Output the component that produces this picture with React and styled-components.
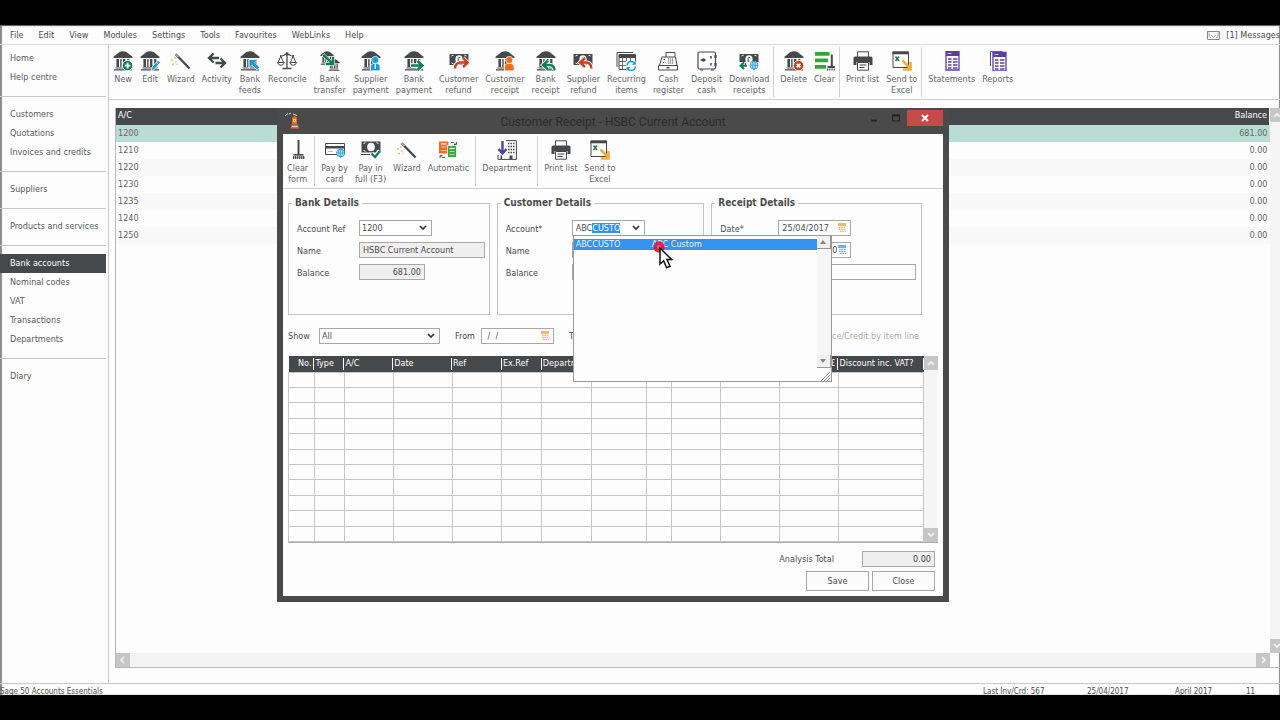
import React, { useEffect, useRef } from "react";
import styled, { createGlobalStyle } from "styled-components";

const DARK = "#46494c";
const GREEN = "#0f7f5a";
const BLUE = "#1c9ad6";
const ORANGE = "#f26a1b";
const RED = "#c8401c";
const PURPLE = "#5b3fa0";

/* ---------- icons ---------- */

const Icon = ({ children, size = 20 }) => (
  <svg width={size} height={size} viewBox="0 0 20 20" fill="none" aria-hidden="true">
    {children}
  </svg>
);

const BankShape = () => (
  <g fill={DARK}>
    <path d="M0.5 5.8 L6.5 1 Q10 -0.4 13.5 1 L19.5 5.8 V7 H0.5z" />
    <path d="M3.4 8h2.6v8H3.4zM7.2 8h1.4v8H7.2zM10 8h2.4v8H10zM14.2 8h2.2v8h-2.2z" />
    <path d="M2.5 16.4h15v1h-15zM1 18.2h18v1.4H1z" />
  </g>
);

const NoteShape = () => (
  <g>
    <path d="M0.5 3h19v11h-19z" fill={DARK} />
    <path d="M2.5 5l2-0.8M17.5 5l-2-0.8M2.5 12l2 .8M17.5 12l-2 .8" stroke="#fdfdfd" />
    <ellipse cx="10" cy="8.5" rx="3.6" ry="4.2" fill="#fdfdfd" />
    <path d="M8.6 11.2h3M9.2 11V7.6q0-1.6 2-1" stroke={DARK} />
  </g>
);

const NewIcon = () => (
  <Icon>
    <BankShape />
    <circle cx="14.6" cy="14.6" r="5.2" fill={GREEN} stroke="#fdfdfd" />
    <path d="M14.6 11.8v5.6M11.8 14.6h5.6" stroke="#fff" strokeWidth="1.8" />
  </Icon>
);

const EditIcon = () => (
  <Icon>
    <BankShape />
    <path d="M11.2 20l1-4 5.8-6.6 2.4 2.2-5.8 6.6z" fill={BLUE} stroke="#fdfdfd" strokeWidth=".8" />
    <path d="M16.2 11.4l2.4 2.2" stroke="#fdfdfd" strokeWidth=".8" />
  </Icon>
);

const WizardIcon = () => (
  <Icon>
    <path d="M4.5 3l14 14.5" stroke={DARK} strokeWidth="2.4" />
    <path d="M4 2.5l3.4 3.5" stroke="#fdfdfd" strokeWidth="1" />
    <path d="M0 9h2M3 7h2M4 11h1.6M1 13.5h2M5.5 13.5h1" stroke="#e0c070" strokeWidth="1.6" />
  </Icon>
);

const ActivityIcon = () => (
  <Icon>
    <path d="M6.5 2.5L2 7l4.5 4.5M2.5 7H12" stroke={DARK} strokeWidth="2.4" />
    <path d="M13.5 7.5L18 12l-4.5 4.5M17.5 12H8.5" stroke={DARK} strokeWidth="2.4" />
  </Icon>
);

const FeedsIcon = () => (
  <Icon>
    <BankShape />
    <path d="M9 8.5h9l-3 3 4.8 5-2.6 2.6-5-4.8-3.2 3z" fill={BLUE} stroke="#fdfdfd" strokeWidth=".8" />
  </Icon>
);

const ReconcileIcon = () => (
  <Icon>
    <path d="M10 2v15M3 5q4 0 5-1.5h4q1 1.5 5 1.5M5.5 17.5h9" stroke={DARK} strokeWidth="1.3" />
    <path d="M3.8 5L1.2 11.5M3.8 5l2.7 6.5M16.2 5l-2.7 6.5M16.2 5l2.6 6.5" stroke={DARK} />
    <path d="M.5 11.5h6.8q-.8 2.8-3.4 2.8T.5 11.5zM12.7 11.5h6.8q-.8 2.8-3.4 2.8t-3.4-2.8z" fill="#fdfdfd" stroke={DARK} />
    <circle cx="10" cy="2.5" r="1.3" fill={DARK} />
  </Icon>
);

const TransferIcon = () => (
  <Icon>
    <g transform="scale(.7)"><BankShape /></g>
    <g transform="translate(8 8) scale(.6)"><BankShape /></g>
    <path d="M4 2.5l7.5 7V5.5h3v9H5.5v-3h4L2 5z" fill={GREEN} stroke="#fdfdfd" strokeWidth=".6" />
  </Icon>
);

const PersonShape = ({ color }) => (
  <g fill={color} stroke="#fdfdfd" strokeWidth=".8">
    <path d="M9.5 19.8v-3.5q0-4 4.8-4t4.8 4v3.5z" />
    <circle cx="14.3" cy="9" r="3.6" />
  </g>
);

const SupplierPaymentIcon = () => (
  <Icon>
    <BankShape />
    <PersonShape color={BLUE} />
    <path d="M14.3 13v5" stroke="#fdfdfd" strokeWidth="1.2" />
  </Icon>
);

const CustomerReceiptIcon = () => (
  <Icon>
    <BankShape />
    <PersonShape color={ORANGE} />
  </Icon>
);

const BankPaymentIcon = () => (
  <Icon>
    <BankShape />
    <path d="M7 14.5h10M13.5 10l4.8 4.5-4.8 4.5" stroke="#fdfdfd" strokeWidth="4.5" />
    <path d="M7 14.5h10.5M13.5 10l4.8 4.5-4.8 4.5" stroke={GREEN} strokeWidth="2.6" />
  </Icon>
);

const BankReceiptIcon = () => (
  <Icon>
    <BankShape />
    <path d="M12 9.5l-5 4.5 5 4.5M7.5 14h6q4.5 0 5 5" stroke="#fdfdfd" strokeWidth="4" />
    <path d="M12 9.5l-5 4.5 5 4.5M7.5 14h6q4.5 0 5 5" stroke={GREEN} strokeWidth="2.4" />
  </Icon>
);

const CustomerRefundIcon = () => (
  <Icon>
    <NoteShape />
    <path d="M6 17q0-5.5 6-5.5h5M14 7l4.8 4.5L14 16" stroke="#fdfdfd" strokeWidth="4" />
    <path d="M6 17.5q0-6 6-6h6M14 7l4.8 4.5L14 16" stroke={RED} strokeWidth="2.4" />
  </Icon>
);

const SupplierRefundIcon = () => (
  <Icon>
    <NoteShape />
    <path d="M12 7l-5 4.5 5 4.5M8 11.5h5q5 0 5.5 6" stroke="#fdfdfd" strokeWidth="4" />
    <path d="M12 7l-5 4.5 5 4.5M7.5 11.5h5.5q5 0 5.5 6" stroke={RED} strokeWidth="2.4" />
  </Icon>
);

const RecurringIcon = () => (
  <Icon>
    <path d="M1 16V1.5h16" stroke={DARK} />
    <path d="M3 3.5h16.5v15H3z" fill="#fdfdfd" stroke={DARK} />
    <path d="M3 4h16.5v3H3z" fill={DARK} />
    <path d="M6.5 7v11M10.5 7v11M14.5 7v11M3 10.5h16M3 14.5h16" stroke={DARK} strokeWidth=".8" />
    <path d="M10 10h10v10H10z" fill="#fdfdfd" />
    <path d="M11 14.5q.5-4 4.5-4 2 0 3.5 1.8M19.5 15.5q-.5 4-4.5 4-2 0-3.5-1.8" stroke={BLUE} strokeWidth="1.5" />
    <path d="M19.8 9.8v4h-4zM10.5 20v-4h4z" fill={BLUE} />
  </Icon>
);

const RegisterIcon = () => (
  <Icon>
    <path d="M8 6V1.5h9V6" stroke={DARK} />
    <path d="M4 6h13.5l1.5 8.5H1.5zM.5 14.5h19v4.5H.5z" stroke={DARK} />
    <path d="M5.5 8.5h2M5 11.5h2.5M10 8h6M10 10h6M10 12h6" stroke={DARK} strokeDasharray="1.2 .8" />
    <path d="M8.5 16.7h3" stroke={DARK} strokeWidth="1.4" />
  </Icon>
);

const DepositIcon = () => (
  <Icon>
    <path d="M2.5 1h14.5q1.5 0 1.5 1.5v14q0 1.5-1.5 1.5H2.5Q1 18 1 16.5v-14Q1 1 2.5 1z" stroke={DARK} strokeWidth="1.2" />
    <path d="M3 18.5h3v1H3zM14 18.5h3v1h-3z" fill={DARK} />
    <path d="M3.5 9h5M14 5v2.5M14 12v2.5" stroke={DARK} strokeWidth="1.5" />
    <circle cx="6.5" cy="9" r="1.8" fill={DARK} />
    <path d="M18.5 4v3M18.5 12v3" stroke={DARK} strokeWidth="2.2" />
  </Icon>
);

const GlobeShape = ({ cx, cy, r }) => (
  <g stroke={BLUE} strokeWidth=".8">
    <circle cx={cx} cy={cy} r={r} fill="#d9f0f8" />
    <ellipse cx={cx} cy={cy} rx={r / 2} ry={r} />
    <path d={`M${cx - r} ${cy}h${r * 2}M${cx} ${cy - r}v${r * 2}`} />
  </g>
);

const DownloadIcon = () => (
  <Icon>
    <NoteShape />
    <path d="M0 11h20v9H0z" fill="#fdfdfd" />
    <path d="M6.5 12v3" stroke={DARK} />
    <path d="M5 11.5l-3.5 3.3L5 18M2 14.8h6" stroke={GREEN} strokeWidth="2" />
    <GlobeShape cx={15} cy={14.2} r={4} />
  </Icon>
);

const DeleteIcon = () => (
  <Icon>
    <BankShape />
    <circle cx="14.6" cy="14.6" r="5.2" fill={RED} stroke="#fdfdfd" />
    <path d="M12.8 12.8l3.6 3.6M16.4 12.8l-3.6 3.6" stroke="#fff" strokeWidth="1.8" />
  </Icon>
);

const ClearIcon = () => (
  <Icon>
    <path d="M0 1h14.5v3.8H0zM0 7.5h13v3.8H0zM0 14h11v3.8H0z" fill="#34a53c" />
    <path d="M16.8 3.5V15" stroke={DARK} strokeWidth="2" />
    <path d="M12.5 15h7.5v2h-7.5z" fill={DARK} />
    <path d="M12 18.5h8" stroke={DARK} strokeWidth="2" strokeDasharray="1 .8" />
  </Icon>
);

const PrintIcon = () => (
  <Icon>
    <path d="M4.5 6V.8h11V6" stroke={DARK} />
    <path d="M2 5.5h16q1.5 0 1.5 1.5v7h-3v-3h-13v3h-3V7Q.5 5.5 2 5.5z" fill={DARK} />
    <path d="M4.5 11.5h11v7.7h-11z" fill="#fdfdfd" stroke={DARK} />
    <path d="M6.5 14h7M6.5 16.5h5" stroke={DARK} />
  </Icon>
);

const ExcelIcon = () => (
  <Icon>
    <path d="M1 1h15.5v15.5H1z" fill="#fdfdfd" stroke={DARK} />
    <path d="M.5.5h16.5v2.8H.5z" fill={DARK} />
    <path d="M3.5 5.5l3.5 4.5M7 5.5L3.5 10" stroke="#1b7a4a" strokeWidth="1.5" />
    <path d="M10.5 9.5l7 7M18.5 11v7.5H11" stroke="#f3ad3a" strokeWidth="2.6" />
  </Icon>
);

const SheetShape = () => (
  <g>
    <path d="M4 .5h13v18.5H4z" fill="#fdfdfd" stroke={PURPLE} strokeWidth="1.3" />
    <path d="M4 .5h13v4.5H4z" fill={PURPLE} />
    <path d="M5.5 2.5h4" stroke="#cfc4ec" />
    <path d="M6 8h3.5M11 8h4.5M6 11h3.5M11 11h4.5M6 14h3.5M11 14h4.5M6 17h3.5M11 17h4.5" stroke={PURPLE} strokeWidth="1.6" />
  </g>
);

const StatementsIcon = () => <Icon><SheetShape /></Icon>;

const ReportsIcon = () => (
  <Icon>
    <path d="M2.5 15V.7h12" stroke={PURPLE} />
    <g transform="translate(1 1)"><SheetShape /></g>
  </Icon>
);

const BrushIcon = () => (
  <Icon>
    <path d="M10.5 0v14" stroke={DARK} strokeWidth="2" />
    <path d="M5.5 14h10v1.6h-10z" fill={DARK} />
    <path d="M5 17.5h11.5" stroke={DARK} strokeWidth="3" strokeDasharray="1.4 .6" />
  </Icon>
);

const CardIcon = () => (
  <Icon>
    <path d="M.5 3.5h19v11H.5z" fill="#fdfdfd" stroke={DARK} />
    <path d="M.5 6h19v2.5H.5z" fill={DARK} />
    <path d="M3 11.5h5" stroke="#bbb" />
    <GlobeShape cx={15.5} cy={13} r={4} />
  </Icon>
);

const PayFullIcon = () => (
  <Icon>
    <path d="M.5 1.5h19v11H.5z" fill={DARK} />
    <path d="M2.5 3.5l2-.8M17.5 3.5l-2-.8M2.5 10.5l2 .8M17.5 10.5l-2 .8" stroke="#fdfdfd" />
    <ellipse cx="10" cy="7" rx="3.8" ry="4.3" fill="#fdfdfd" />
    <path d="M0 14.5h9" stroke={DARK} />
    <path d="M10.5 13.5l3.5 3.5 5-6" stroke="#fdfdfd" strokeWidth="4.5" />
    <path d="M10.5 13.5l3.5 3.5 5-6" stroke={GREEN} strokeWidth="2.4" />
  </Icon>
);

const AutomaticIcon = () => (
  <Icon>
    <path d="M1 1.5h9.5v12H1z" fill={ORANGE} />
    <path d="M3 4h5.5" stroke="#fde" strokeWidth="1.5" />
    <path d="M3 7h5.5M3 10.5h5.5" stroke="#fbd2b8" strokeWidth=".8" />
    <path d="M9.5 5.5h9v12h-9z" fill="#44a548" stroke="#fdfdfd" strokeWidth=".8" />
    <path d="M11.5 8.5h5" stroke="#e4f5e4" strokeWidth="1.3" />
    <path d="M11.5 11.5h5M11.5 14.5h5" stroke="#bfe3c0" strokeWidth=".8" />
    <path d="M13 2.5q3.5-1 4.5 1.5M16 4.5h2.5V2M7 17.5q-3.5 1-4.5-1.5M4.5 15.5H2V18" stroke={DARK} strokeWidth=".9" />
  </Icon>
);

const DepartmentIcon = () => (
  <Icon>
    <path d="M9 .6h10.4v18.8H1V15" stroke={DARK} />
    <path d="M11 3.5h6.5M11 6.5h6.5M11 9.5h6.5M11 12.5h6.5" stroke={DARK} strokeWidth="1.6" strokeDasharray="1.5 1" />
    <path d="M12.5 15.5h3V19h-3zM3.5 15.5h1.5V19H3.5z" fill={DARK} />
    <path d="M5.5 1v12M1.5 9l4 4.5 4-4.5" stroke={PURPLE} strokeWidth="2.4" />
  </Icon>
);

const Chevron = ({ d = "M2 3l3 3 3-3", color = "#333" }) => (
  <svg width="10" height="10" viewBox="0 0 10 10" fill="none" aria-hidden="true">
    <path d={d} stroke={color} strokeWidth="1.7" />
  </svg>
);

const CalendarGlyph = ({ color }) => (
  <svg width="10" height="10" viewBox="0 0 10 10" aria-hidden="true">
    <path d="M1 0h8v3H1z" fill={color} />
    <path d="M2 3h6.5v6.5H2z" fill={color} opacity=".25" />
    <path d="M2 4.5h7M2 6.5h7M3 8.5h6" stroke={color} strokeDasharray="1.6 .8" />
  </svg>
);

/* ---------- data ---------- */

const menuItems = ["File", "Edit", "View", "Modules", "Settings", "Tools", "Favourites", "WebLinks", "Help"];

const navGroups = [
  ["Home", "Help centre"],
  ["Customers", "Quotations", "Invoices and credits"],
  ["Suppliers"],
  ["Products and services"],
  ["Bank accounts", "Nominal codes", "VAT", "Transactions", "Departments"],
  ["Diary"],
];

const mainTools = [
  [
    ["New", NewIcon],
    ["Edit", EditIcon],
    ["Wizard", WizardIcon],
    ["Activity", ActivityIcon],
    ["Bank\nfeeds", FeedsIcon],
    ["Reconcile", ReconcileIcon],
    ["Bank\ntransfer", TransferIcon],
    ["Supplier\npayment", SupplierPaymentIcon],
    ["Bank\npayment", BankPaymentIcon],
    ["Customer\nrefund", CustomerRefundIcon],
    ["Customer\nreceipt", CustomerReceiptIcon],
    ["Bank\nreceipt", BankReceiptIcon],
    ["Supplier\nrefund", SupplierRefundIcon],
    ["Recurring\nitems", RecurringIcon],
    ["Cash\nregister", RegisterIcon],
    ["Deposit\ncash", DepositIcon],
    ["Download\nreceipts", DownloadIcon],
  ],
  [["Delete", DeleteIcon], ["Clear", ClearIcon]],
  [["Print list", PrintIcon], ["Send to\nExcel", ExcelIcon]],
  [["Statements", StatementsIcon], ["Reports", ReportsIcon]],
];

const dialogTools = [
  [["Clear\nform", BrushIcon]],
  [
    ["Pay by\ncard", CardIcon],
    ["Pay in\nfull (F3)", PayFullIcon],
    ["Wizard", WizardIcon],
    ["Automatic", AutomaticIcon],
  ],
  [["Department", DepartmentIcon]],
  [["Print list", PrintIcon], ["Send to\nExcel", ExcelIcon]],
];

const accounts = [
  ["1200", "681.00"],
  ["1210", "0.00"],
  ["1220", "0.00"],
  ["1230", "0.00"],
  ["1235", "0.00"],
  ["1240", "0.00"],
  ["1250", "0.00"],
];

const receiptColumns = [
  { label: "No.", width: 26, right: true },
  { label: "Type", width: 30 },
  { label: "A/C", width: 49 },
  { label: "Date", width: 59 },
  { label: "Ref", width: 50 },
  { label: "Ex.Ref", width: 40 },
  { label: "Department", width: 49 },
  { label: "Details", width: 55 },
  { label: "T/C", width: 25 },
  { label: "Amount £", width: 49, right: true },
  { label: "Receipt £", width: 59, right: true },
  { label: "Discount £", width: 59, right: true },
  { label: "Discount inc. VAT?", width: 85 },
];

/* ---------- parts ---------- */

const Tools = ({ groups, inset }) => (
  <Toolbar>
    {groups.map((group, i) => (
      <ToolGroup key={i} $inset={inset}>
        {group.map(([label, Glyph]) => (
          <ToolButton key={label} type="button">
            <Glyph />
            <span>{label}</span>
          </ToolButton>
        ))}
      </ToolGroup>
    ))}
  </Toolbar>
);

const DateField = ({ id, value, color, right }) => (
  <FieldBox $width={73}>
    <BareInput id={id} defaultValue={value} $right={right} />
    <CalendarGlyph color={color} />
  </FieldBox>
);

const SelectField = ({ id, width, options }) => (
  <FieldBox $width={width}>
    <BareSelect id={id}>
      {options.map((o) => (
        <option key={o}>{o}</option>
      ))}
    </BareSelect>
    <Chevron />
  </FieldBox>
);

const AccountPicker = () => {
  const input = useRef(null);

  useEffect(() => {
    input.current.focus();
    input.current.setSelectionRange(3, 8);
  }, []);

  return (
    <Picker>
      <FieldBox $width={73}>
        <BareInput id="account" ref={input} defaultValue="ABCCUSTO" />
        <Chevron />
      </FieldBox>
      <PickerMenu>
        <PickerList role="listbox" aria-label="Accounts">
          <PickerOption role="option" aria-selected="true">
            <span>ABCCUSTO</span>
            <span>ABC Custom</span>
          </PickerOption>
        </PickerList>
        <PickerScroll>
          <ClassicButton type="button" aria-label="Scroll up">
            <svg width="6" height="4" viewBox="0 0 6 4"><path d="M0 4l3-4 3 4z" fill="#888" /></svg>
          </ClassicButton>
          <PickerTrack />
          <ClassicButton type="button" aria-label="Scroll down">
            <svg width="6" height="4" viewBox="0 0 6 4"><path d="M0 0h6L3 4z" fill="#888" /></svg>
          </ClassicButton>
          <svg width="13" height="13" viewBox="0 0 13 13">
            <path d="M4 13l9-9M7 13l6-6M10 13l3-3" stroke="#888" />
          </svg>
        </PickerScroll>
      </PickerMenu>
    </Picker>
  );
};

const ReceiptDialog = () => (
  <Dialog role="dialog" aria-labelledby="dialog-title">
    <TitleBar>
      <TitleIcon>
        <svg width="16" height="18" viewBox="0 0 16 18" fill="none">
          <path d="M1 4l3-2.500M5 2l2-1M9 2l4 1.500" stroke="#ddd" />
          <path d="M6.500 16.500h8.500l-1-4h-6.500z" fill={ORANGE} />
          <path d="M8 12V6q2.500-3.500 5 0v6z" fill={ORANGE} />
          <path d="M9.500 7.500h2v2h-2zM8 14.500h5.500" stroke="#fbe0cf" strokeWidth=".9" />
        </svg>
      </TitleIcon>
      <Title id="dialog-title">Customer Receipt - HSBC Current Account</Title>
      <WindowButtons>
        <WindowButton type="button" aria-label="Minimise">
          <svg width="10" height="10" viewBox="0 0 10 10"><path d="M2 6.500h6v2H2z" fill="#222" /></svg>
        </WindowButton>
        <WindowButton type="button" aria-label="Maximise">
          <svg width="10" height="10" viewBox="0 0 10 10" fill="none">
            <path d="M1.500 2h7v6h-7z" stroke="#222" />
            <path d="M1 1.500h8v2H1z" fill="#222" />
          </svg>
        </WindowButton>
        <CloseButton type="button" aria-label="Close window">
          <svg width="8" height="8" viewBox="0 0 8 8"><path d="M1 1l6 6M7 1L1 7" stroke="#fff" strokeWidth="1.8" /></svg>
        </CloseButton>
      </WindowButtons>
    </TitleBar>

    <DialogBody>
      <Tools groups={dialogTools} inset={6} />
      <Panels>
        <Panel>
          <legend>Bank Details</legend>
          <Fields $label={62}>
            <label htmlFor="bank-ref">Account Ref</label>
            <SelectField id="bank-ref" width={73} options={["1200"]} />
            <label htmlFor="bank-name">Name</label>
            <ReadOnly id="bank-name" readOnly value="HSBC Current Account" $width={126} />
            <label htmlFor="bank-balance">Balance</label>
            <ReadOnly id="bank-balance" readOnly value="681.00" $width={66} $right />
          </Fields>
        </Panel>
        <Panel>
          <legend>Customer Details</legend>
          <Fields $label={66}>
            <label htmlFor="account">Account*</label>
            <AccountPicker />
            <label htmlFor="customer-name">Name</label>
            <ReadOnly id="customer-name" readOnly value="" $width={126} />
            <label htmlFor="customer-balance">Balance</label>
            <ReadOnly id="customer-balance" readOnly value="" $width={66} $right />
          </Fields>
        </Panel>
        <Panel>
          <legend>Receipt Details</legend>
          <Fields $label={58}>
            <label htmlFor="date">Date*</label>
            <DateField id="date" value="25/04/2017" color="#efc04e" />
            <label htmlFor="amount">Amount</label>
            <DateField id="amount" value="0.00" color="#6db0ea" right />
            <label htmlFor="reference">Reference</label>
            <TextInput id="reference" $width={138} />
          </Fields>
        </Panel>
      </Panels>

      <Filters>
        <label htmlFor="show">Show</label>
        <SelectField id="show" width={121} options={["All"]} />
        <label htmlFor="from">From</label>
        <DateField id="from" value=" /  /" color="#efc04e" />
        <label htmlFor="to">To</label>
        <DateField id="to" value=" /  /" color="#efc04e" />
        <FilterNote>Group Invoice/Credit by item line</FilterNote>
      </Filters>

      <ReceiptGrid>
        <ReceiptTable>
          <colgroup>
            {receiptColumns.map((c) => (
              <col key={c.label} style={{ width: `${(c.width / 635) * 100}%` }} />
            ))}
          </colgroup>
          <thead>
            <tr>
              {receiptColumns.map((c) => (
                <ReceiptHead key={c.label} $right={c.right}>{c.label}</ReceiptHead>
              ))}
            </tr>
          </thead>
          <tbody>
            {Array.from({ length: 11 }, (_, r) => (
              <tr key={r}>
                {receiptColumns.map((c) => (
                  <td key={c.label} />
                ))}
              </tr>
            ))}
          </tbody>
        </ReceiptTable>
        <ScrollColumn $width={14}>
          <ScrollButton type="button" aria-label="Scroll rows up"><Chevron d="M2 7l3-3 3 3" color="#f4f4f4" /></ScrollButton>
          <ScrollButton type="button" aria-label="Scroll rows down"><Chevron d="M2 3l3 3 3-3" color="#f4f4f4" /></ScrollButton>
        </ScrollColumn>
      </ReceiptGrid>

      <Totals>
        <label htmlFor="total">Analysis Total</label>
        <ReadOnly id="total" readOnly value="0.00" $width={73} $right />
      </Totals>
      <Actions>
        <ActionButton type="button">Save</ActionButton>
        <ActionButton type="button">Close</ActionButton>
      </Actions>
    </DialogBody>
  </Dialog>
);

const App = () => (
  <Screen>
    <GlobalStyle />
    <Window>
      <MenuBar>
        {menuItems.map((m) => (
          <MenuButton key={m} type="button">{m}</MenuButton>
        ))}
        <Messages href="#messages">
          <svg width="13" height="9" viewBox="0 0 13 9" fill="none">
            <path d="M.5.5h12v8H.5z" stroke="#888" />
            <path d="M2 1.500v4l2 1.500M11 1.500v4L9 7M4 4l2.500 2L9 4" stroke="#999" strokeWidth=".9" />
          </svg>
          [1] Messages
        </Messages>
      </MenuBar>

      <Body>
        <Sidebar>
          {navGroups.map((group) => (
            <NavGroup key={group[0]}>
              {group.map((item) => (
                <NavLink key={item} href="#nav" $active={item === "Bank accounts"}>{item}</NavLink>
              ))}
            </NavGroup>
          ))}
        </Sidebar>

        <Main>
          <Tools groups={mainTools} inset={4} />
          <Ledger>
            <LedgerRows>
              <LedgerTable>
                <thead>
                  <tr>
                    <th>A/C</th>
                    <th>Balance</th>
                  </tr>
                </thead>
                <tbody>
                  {accounts.map(([code, balance], i) => (
                    <LedgerRow key={code} $selected={i === 0}>
                      <td>{code}</td>
                      <td>{balance}</td>
                    </LedgerRow>
                  ))}
                </tbody>
              </LedgerTable>
              <ScrollRow>
                <ScrollButton type="button" aria-label="Scroll left"><Chevron d="M6 2L3 5l3 3" color="#f4f4f4" /></ScrollButton>
                <ScrollButton type="button" aria-label="Scroll right"><Chevron d="M4 2l3 3-3 3" color="#f4f4f4" /></ScrollButton>
              </ScrollRow>
            </LedgerRows>
            <SideScroll $width={10}>
              <ScrollButton type="button" aria-label="Scroll up"><Chevron d="M2 7l3-3 3 3" color="#f4f4f4" /></ScrollButton>
              <ScrollButton type="button" aria-label="Scroll down"><Chevron d="M2 3l3 3 3-3" color="#f4f4f4" /></ScrollButton>
            </SideScroll>
          </Ledger>
        </Main>
      </Body>

      <StatusBar>
        <StatusName>Sage 50 Accounts Essentials</StatusName>
        <StatusCell $width={104}>Last Inv/Crd: 567</StatusCell>
        <StatusCell $width={88}>25/04/2017</StatusCell>
        <StatusCell $width={71}>April 2017</StatusCell>
        <StatusCell $width={34}>11</StatusCell>
      </StatusBar>

      <ReceiptDialog />

      <Pointer>
        <svg width="24" height="34" viewBox="0 0 24 34">
          <circle cx="7" cy="7" r="5.5" fill="#e0142c" opacity=".9" />
          <circle cx="7" cy="7" r="2" fill="#f05a78" />
          <path d="M8 8v16l3.600-3.300 3 7 3.400-1.400-3-6.800h4.600z" fill="#fff" stroke="#111" strokeWidth="1.5" />
        </svg>
      </Pointer>
    </Window>
  </Screen>
);

export default App;

/* ---------- styles ---------- */

const GlobalStyle = createGlobalStyle`
  * {
    box-sizing: border-box;
  }
  body {
    margin: 0;
    background: #000;
  }
  body, button, input, select {
    font-family: "DejaVu Sans Condensed", "Noto Sans", sans-serif;
    font-size: 9px;
    line-height: 11px;
    color: #4c4c4c;
  }
  a {
    color: inherit;
    text-decoration: none;
  }
`;

const Screen = styled.div`
  display: flex;
  min-height: 100vh;
  padding: 25px 0;
  background: #000;
`;

const Window = styled.div`
  position: relative;
  display: flex;
  flex-direction: column;
  flex: 1;
  min-width: 0;
  overflow: hidden;
  background: #fdfdfd;
  border-top: 1px solid #666;
  box-shadow: inset 2px 0 1px #888, inset -1px 0 1px #888;
`;

const MenuBar = styled.nav`
  display: flex;
  align-items: center;
  gap: 15px;
  height: 19px;
  padding-left: 10px;
  border-bottom: 1px solid #dcdcdc;
`;

const MenuButton = styled.button`
  padding: 0;
  border: 0;
  background: none;
`;

const Messages = styled.a`
  display: flex;
  align-items: center;
  gap: 6px;
  margin-left: auto;
  white-space: nowrap;
`;

const Body = styled.div`
  display: flex;
  flex: 1;
`;

const Sidebar = styled.aside`
  flex: 0 0 109px;
  padding: 4px 2px 0 0;
  border-right: 1px solid #c8c8c8;
`;

const NavGroup = styled.div`
  & + & {
    margin-top: 9px;
    padding-top: 8px;
    border-top: 1px solid #c8c8c8;
  }
`;

const NavLink = styled.a`
  display: block;
  padding-left: 10px;
  line-height: 19px;
  white-space: nowrap;
  color: ${(p) => (p.$active ? "#fff" : "#5a5a5a")};
  background: ${(p) => (p.$active ? "#46494c" : "transparent")};
`;

const Main = styled.main`
  display: flex;
  flex-direction: column;
  flex: 1;
  min-width: 0;
`;

const Toolbar = styled.div`
  display: flex;
  height: 55px;
  padding: 2px 0;
  border-bottom: 1px solid #d0d0d0;
`;

const ToolGroup = styled.div`
  display: flex;
  gap: 7px;
  padding: 4px ${(p) => p.$inset}px 0 4px;

  & + & {
    padding-left: ${(p) => p.$inset}px;
    border-left: 1px solid #d0d0d0;
  }
`;

const ToolButton = styled.button`
  display: flex;
  flex-direction: column;
  align-items: center;
  gap: 3px;
  padding: 0;
  border: 0;
  background: none;
  color: #666;
  white-space: pre;
`;

const Ledger = styled.section`
  display: flex;
  flex: 1;
  margin: 8px 0 15px 6px;
  border-left: 1px solid #b8b8b8;
  border-bottom: 1px solid #b8b8b8;
`;

const LedgerRows = styled.div`
  display: flex;
  flex-direction: column;
  justify-content: space-between;
  flex: 1;
`;

const LedgerTable = styled.table`
  width: 100%;
  border-collapse: collapse;

  th,
  td {
    height: 17px;
    padding: 0 2px;
    text-align: left;
    font-weight: 400;
  }
  th {
    padding-bottom: 2px;
    color: #fff;
    background: #46494c;
  }
  th:last-child,
  td:last-child {
    text-align: right;
  }
  th:last-child {
    border-right: 1px solid #fff;
  }
`;

const LedgerRow = styled.tr`
  color: #666;
  background: ${(p) => (p.$selected ? "#b9ddd3" : "transparent")};

  &:nth-child(odd):not(:first-child) {
    background: #f8f8f8;
  }
`;

const ScrollRow = styled.div`
  display: flex;
  justify-content: space-between;
  height: 14px;
  background: #f3f3f3;
`;

const ScrollColumn = styled.div`
  display: flex;
  flex-direction: column;
  justify-content: space-between;
  flex: 0 0 ${(p) => p.$width}px;
  overflow: hidden;
  background: #f5f5f5;
`;

const SideScroll = styled(ScrollColumn)`
  margin-bottom: 14px;
`;

const ScrollButton = styled.button`
  display: grid;
  place-items: center;
  width: 14px;
  height: 14px;
  padding: 0;
  border: 0;
  background: #c6c6c6;
`;

const StatusBar = styled.footer`
  display: flex;
  height: 12px;
  border-top: 1px solid #c8c8c8;
  font-size: 8px;
  line-height: 15px;
  white-space: nowrap;
`;

const StatusName = styled.span`
  flex: 1;
`;

const StatusCell = styled.span`
  flex: 0 0 ${(p) => p.$width}px;
`;

const Dialog = styled.section`
  position: absolute;
  top: 82px;
  left: 277px;
  width: 672px;
  padding: 0 6px 6px;
  background: #4a4a4a;
`;

const TitleBar = styled.header`
  display: grid;
  grid-template-columns: 1fr auto 1fr;
  height: 26px;
`;

const TitleIcon = styled.div`
  padding: 4px 0 0 1px;
`;

const Title = styled.h1`
  margin: 0;
  font-family: Roboto, "Noto Sans", sans-serif;
  font-size: 12px;
  font-weight: 400;
  line-height: 28px;
  color: #2b2b2b;
`;

const WindowButtons = styled.div`
  display: flex;
  justify-content: flex-end;
  align-items: flex-start;
  padding-top: 2px;
`;

const WindowButton = styled.button`
  display: grid;
  place-items: center;
  width: 22px;
  height: 16px;
  padding: 0;
  border: 0;
  background: none;
`;

const CloseButton = styled(WindowButton)`
  width: 36px;
  background: #c74a4a;
`;

const DialogBody = styled.div`
  background: #fdfdfd;
`;

const Panels = styled.div`
  display: grid;
  grid-template-columns: 202fr 208fr 211fr;
  gap: 7px;
  padding: 7px 21px 0 5px;
`;

const Panel = styled.fieldset`
  min-width: 0;
  height: 119px;
  margin: 0;
  padding: 10px 8px 0;
  border: 1px solid #c4c4c4;

  legend {
    margin-left: -5px;
    padding: 0 3px;
    font-size: 10px;
    font-weight: 700;
    line-height: 14px;
  }
`;

const Fields = styled.div`
  display: grid;
  grid-template-columns: ${(p) => p.$label}px 1fr;
  gap: 6px 0;

  label {
    padding-top: 4px;
  }
`;

const FieldBox = styled.div`
  display: flex;
  align-items: center;
  width: ${(p) => p.$width}px;
  height: 16px;
  padding-right: 3px;
  background: #fff;
  border: 1px solid #a8a8a8;

  svg {
    flex: none;
    pointer-events: none;
  }
`;

const BareInput = styled.input`
  flex: 1;
  min-width: 0;
  height: 12px;
  padding: 0 0 0 3px;
  border: 0;
  outline: 0;
  background: none;
  text-align: ${(p) => (p.$right ? "right" : "left")};

  &::selection {
    color: #fff;
    background: #3393ee;
  }
`;

const BareSelect = styled.select`
  flex: 1;
  min-width: 0;
  height: 14px;
  margin-right: -10px;
  padding: 0 10px 0 2px;
  border: 0;
  background: none;
  appearance: none;
`;

const TextInput = styled.input`
  width: ${(p) => p.$width}px;
  height: 16px;
  padding: 0 3px;
  border: 1px solid #a8a8a8;
  border-radius: 0;
  background: #fff;
`;

const ReadOnly = styled(TextInput)`
  background: #efefef;
  text-align: ${(p) => (p.$right ? "right" : "left")};
`;

const Picker = styled.div`
  position: relative;
`;

const PickerMenu = styled.div`
  position: absolute;
  z-index: 2;
  top: 15px;
  left: 1px;
  display: flex;
  width: 259px;
  height: 147px;
  background: #fdfdfd;
  border: 1px solid #999;
`;

const PickerList = styled.div`
  flex: 1;
  padding-top: 3px;
`;

const PickerOption = styled.div`
  display: grid;
  grid-template-columns: 76px 1fr;
  padding-left: 2px;
  color: #e8f3fd;
  background: #3393ee;
`;

const PickerScroll = styled.div`
  display: flex;
  flex-direction: column;
  width: 14px;
`;

const PickerTrack = styled.div`
  flex: 1;
  background: #f6f6f6;
`;

const ClassicButton = styled.button`
  display: grid;
  place-items: center;
  height: 13px;
  padding: 0;
  background: #f0f0f0;
  border: 0 solid #999;
  border-width: 0 1px 1px 0;
`;

const Filters = styled.div`
  display: flex;
  align-items: center;
  padding: 13px 24px 12px 5px;

  label {
    width: 31px;
  }
  ${FieldBox} + label {
    width: 26px;
    margin-left: 15px;
  }
`;

const FilterNote = styled.span`
  flex: 1;
  text-align: right;
  color: #aaa;
`;

const ReceiptGrid = styled.div`
  display: flex;
  margin: 0 5px;
  border-bottom: 1px solid #aaa;
`;

const ReceiptTable = styled.table`
  flex: 1;
  height: 186px;
  table-layout: fixed;
  border-collapse: collapse;

  td {
    padding: 0;
    border: 1px solid #c6c6c6;
  }
`;

const ReceiptHead = styled.th`
  height: 16px;
  padding: 0 ${(p) => (p.$right ? 3 : 0)}px 0 1px;
  overflow: hidden;
  font-weight: 400;
  white-space: nowrap;
  text-align: ${(p) => (p.$right ? "right" : "left")};
  color: #fff;
  background: linear-gradient(#fff, #fff) right center / 1px 12px no-repeat #46494c;
`;

const Totals = styled.div`
  display: flex;
  justify-content: flex-end;
  align-items: center;
  gap: 28px;
  padding: 8px 8px 4px;
`;

const Actions = styled.div`
  display: flex;
  justify-content: flex-end;
  gap: 3px;
  padding: 0 8px 5px;
`;

const ActionButton = styled.button`
  width: 63px;
  height: 20px;
  padding: 0;
  background: #fbfbfb;
  border: 1px solid #a8a8a8;
`;

const Pointer = styled.div`
  position: absolute;
  z-index: 3;
  top: 214px;
  left: 652px;
  pointer-events: none;
`;
